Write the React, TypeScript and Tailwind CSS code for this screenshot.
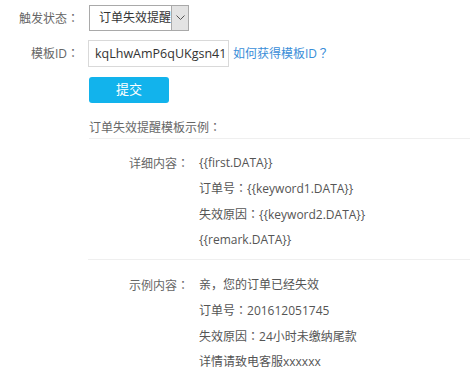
const C = () => <span className="font-['Noto_Sans_CJK_TC',sans-serif]">：</span>;

export default function App() {
  const font = "font-['Open_Sans','Noto_Sans_CJK_SC',sans-serif]";
  return (
    <div className={`w-[470px] h-[378px] bg-white text-[12px] text-[#555] ${font}`}>
      <div className="flex items-center pt-[5px]">
        <span className="w-[79px] text-right text-[#666]">触发状态<C /></span>
        <div className="ml-[10px] flex h-[26px] w-[100px] border border-[#a9a9a9] bg-white">
          <span className="flex-1 overflow-hidden whitespace-nowrap pl-[9px] leading-[24px] text-[#333]">
            订单失效提醒
          </span>
          <span className="flex w-[17px] items-center justify-center border-l border-[#a9a9a9] bg-[#e3e3e3]">
            <svg width="9" height="6" viewBox="0 0 9 6" fill="none">
              <path d="M0.5 0.5L4.5 4.5L8.5 0.5" stroke="#555" strokeWidth="1" />
            </svg>
          </span>
        </div>
      </div>
      <div className="mt-[9px] flex items-center">
        <span className="w-[79px] text-right text-[#666]">模板ID<C /></span>
        <div className="ml-[9px] h-[27px] w-[141px] overflow-hidden whitespace-nowrap border border-[#d9d9d9] pl-[6px] text-[12.5px] leading-[25px] text-[#333]">
          kqLhwAmP6qUKgsn41
        </div>
        <a className="ml-[4px] text-[#3a8ed8]">
          如何获得模板ID<span className="font-['Noto_Sans_CJK_TC',sans-serif]">？</span>
        </a>
      </div>
      <div className="ml-[89px] mt-[10px]">
        <button className="h-[26px] w-[80px] rounded-[3px] bg-[#12b3ec] text-[13px] text-white">提交</button>
      </div>
      <div className="ml-[89px] mt-[15px] border-b border-[#efefef] pb-[1px] text-[#666]">
        订单失效提醒模板示例<C />
      </div>
      <div className="ml-[88px] flex border-b border-[#efefef] pt-[11px] pb-[7px]">
        <span className="w-[111px] pl-[41px] leading-[25px] text-[#666]">详细内容<C /></span>
        <div className="flex flex-col leading-[25px]">
          <span>{"{{first.DATA}}"}</span>
          <span>订单号<C />{"{{keyword1.DATA}}"}</span>
          <span>失效原因<C />{"{{keyword2.DATA}}"}</span>
          <span>{"{{remark.DATA}}"}</span>
        </div>
      </div>
      <div className="ml-[88px] flex pt-[12px]">
        <span className="w-[111px] pl-[41px] leading-[25px] text-[#666]">示例内容<C /></span>
        <div className="flex flex-col leading-[25px]">
          <span>亲，您的订单已经失效</span>
          <span>订单号<C />201612051745</span>
          <span>失效原因<C />24小时未缴纳尾款</span>
          <span>详情请致电客服xxxxxx</span>
        </div>
      </div>
    </div>
  );
}
